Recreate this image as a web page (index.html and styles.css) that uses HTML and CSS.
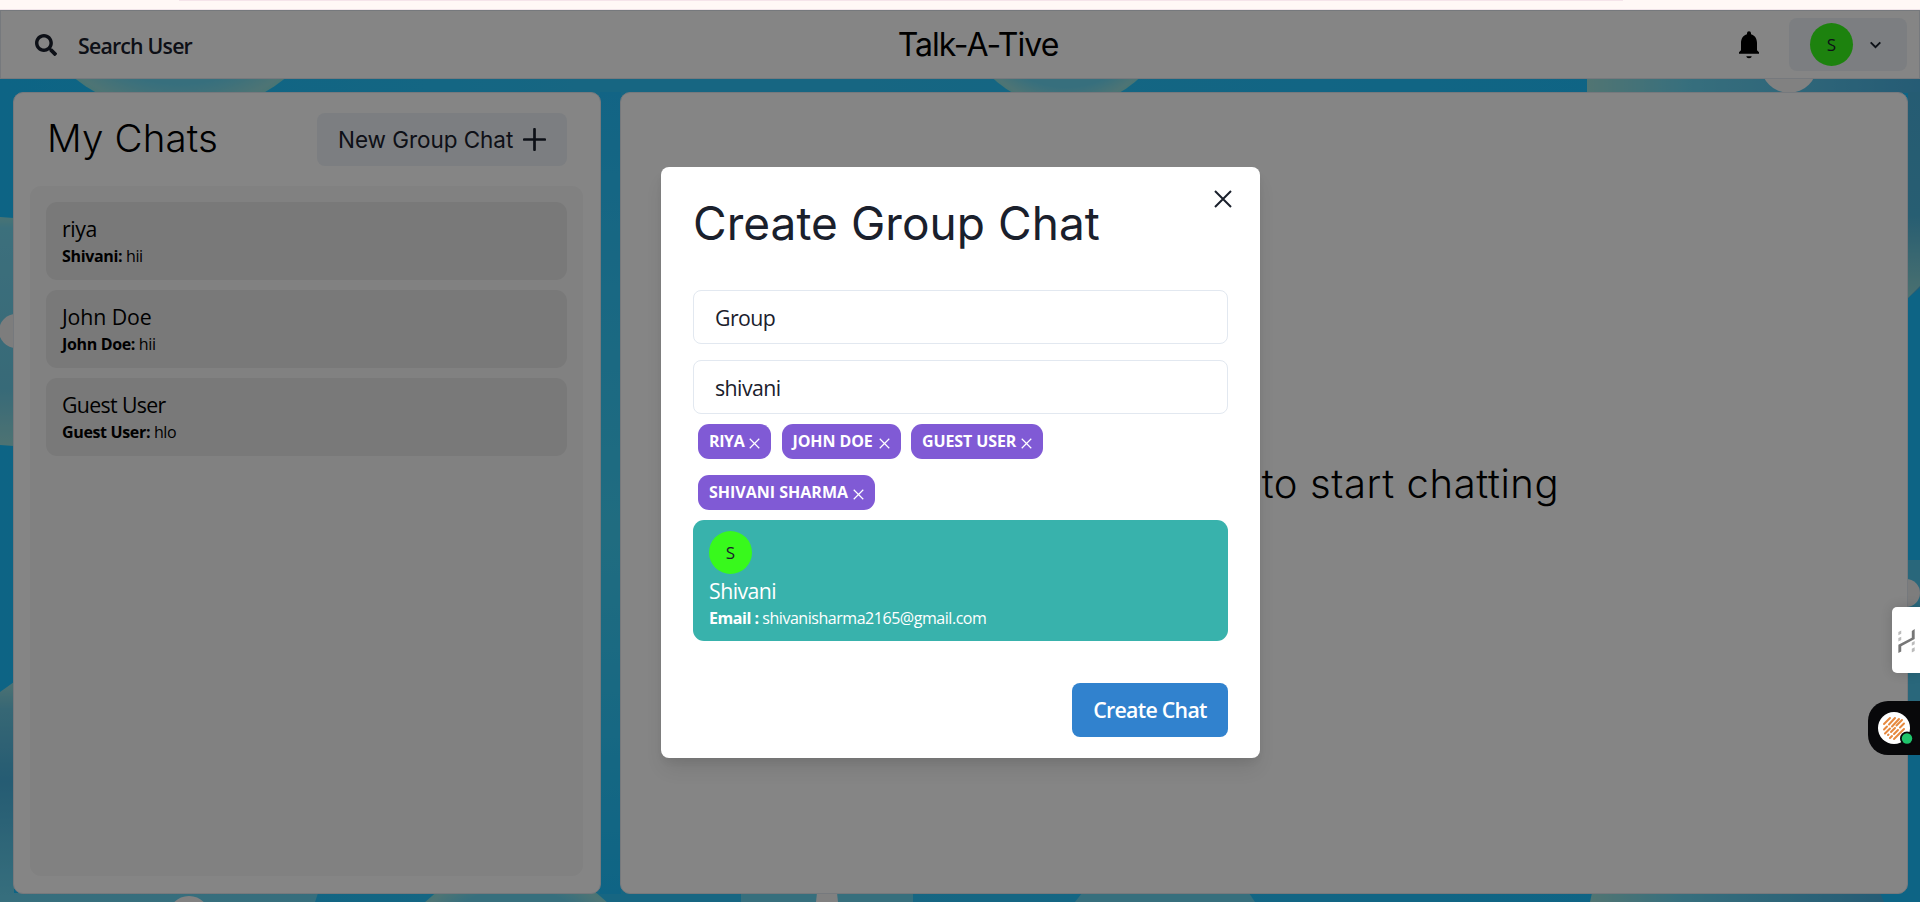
FILE: index.html
```html
<!DOCTYPE html>
<html lang="en">
<head>
<meta charset="utf-8">
<title>Talk-A-Tive</title>
<link rel="stylesheet" href="styles.css">
</head>
<body>
<div class="browser-edge"><div class="edge-line"></div></div>
<div class="app">
  <svg class="backdrop" width="1920" height="892" viewBox="0 10 1920 892" aria-hidden="true">
    <defs>
      <linearGradient id="sky" x1="0" x2="1" y1="0" y2="0"><stop offset="0" stop-color="#19c0ff"/><stop offset=".3" stop-color="#2cc4fa"/><stop offset=".45" stop-color="#2cc4fa"/><stop offset=".85" stop-color="#1dc0ff"/><stop offset="1" stop-color="#19c0ff"/></linearGradient>
      <linearGradient id="mid" x1="0" x2="0" y1="0" y2="1"><stop offset="0" stop-color="#24c0ff"/><stop offset=".55" stop-color="#3fd0f6"/><stop offset="1" stop-color="#1dc0ff"/></linearGradient>
      <radialGradient id="bubble"><stop offset="0" stop-color="#6ad5f0"/><stop offset=".82" stop-color="#6ad5f0"/><stop offset=".97" stop-color="#96dfe0"/><stop offset="1" stop-color="#8be0de"/></radialGradient>
      <linearGradient id="corner" x1="0" x2="1" y1="0" y2="0"><stop offset="0" stop-color="#9ce0dc"/><stop offset=".3" stop-color="#6ad5f0"/><stop offset="1" stop-color="#48b0e0"/></linearGradient>
      <linearGradient id="side" x1="0" x2="0" y1="0" y2="1"><stop offset="0" stop-color="#48b0dc"/><stop offset=".6" stop-color="#4cb4da"/><stop offset="1" stop-color="#8fd8d6"/></linearGradient>
      <linearGradient id="leftmid" x1="0" x2="0" y1="0" y2="1"><stop offset="0" stop-color="#8bdee0"/><stop offset=".05" stop-color="#74d6ee"/><stop offset=".75" stop-color="#6acbe6"/><stop offset="1" stop-color="#96dcdc"/></linearGradient>
      <linearGradient id="leftlow" x1="0" x2="0" y1="0" y2="1"><stop offset="0" stop-color="#96dcdc"/><stop offset=".12" stop-color="#6ac6e0"/><stop offset=".45" stop-color="#48b0dc"/><stop offset="1" stop-color="#6ad5f0"/></linearGradient>
    </defs>
    <rect y="10" width="1920" height="892" fill="url(#sky)"/>
    <rect x="600" y="92" width="21" height="802" fill="url(#mid)"/>
    <circle cx="180" cy="-55" r="170" fill="url(#bubble)"/>
    <circle cx="1066" cy="-1" r="108" fill="url(#bubble)"/>
    <path d="M1587 78H1920V288L1908 298V93H1587Z" fill="url(#corner)"/>
    <path d="M1908 92H1920V286L1908 298Z" fill="url(#side)"/>
    <circle cx="1789" cy="65" r="28" fill="#f8f8f8"/>
    <path d="M0 217L14 218V446L0 445Z" fill="url(#leftmid)"/>
    <circle cx="16" cy="331" r="17" fill="#f0f0f0"/>
    <path d="M0 692L14 682V893H318L315 902H0Z" fill="url(#leftlow)"/>
    <circle cx="189" cy="917" r="21" fill="#f8f8f8"/>
    <circle cx="516" cy="995" r="130" fill="url(#bubble)"/>
    <path d="M741 893H913V902H741Z" fill="#6ad5f0"/>
    <path d="M817 893H837L838 902H816Z" fill="#f8f8f8"/>
    <path d="M1082 893H1249L1255 902H1075Z" fill="#6ad5f0"/>
    <path d="M1592 893H1880L1884 902H1590Z" fill="url(#corner)"/>
    <path d="M1908 560H1920V706L1908 710Z" fill="#4fc6ec"/>
    <circle cx="1906" cy="593" r="14" fill="#f0f0f0"/>
  </svg>
  <header class="topbar">
    <button class="search">
      <svg width="22" height="22" viewBox="0 0 512 512"><path fill="currentColor" d="M505 442.700L405.300 343c-4.500-4.500-10.600-7-17-7H372c27.600-35.300 44-79.700 44-128C416 93.100 322.900 0 208 0S0 93.100 0 208s93.100 208 208 208c48.300 0 92.700-16.400 128-44v16.300c0 6.400 2.500 12.500 7 17l99.700 99.700c9.400 9.400 24.600 9.400 33.900 0l28.300-28.300c9.400-9.400 9.400-24.600.1-34zM208 336c-70.700 0-128-57.200-128-128 0-70.700 57.200-128 128-128 70.700 0 128 57.200 128 128 0 70.700-57.200 128-128 128z"/></svg>
      <span class="search-label">Search User</span>
    </button>
    <h1 class="brand">Talk-A-Tive</h1>
    <div class="tools">
      <svg class="bell" width="32" height="32" viewBox="0 0 24 24"><path d="M12 22c1.100 0 2-.6 2-1.500h-4c0 .9.900 1.500 2 1.500zm7.500-4.500L18 16v-5.500c0-3.300-1.700-5.900-4.500-6.600V3.200a1.500 1.500 0 0 0-3 0v.7C7.700 4.600 6 7.200 6 10.500V16l-1.500 1.500v1.100h15z"/></svg>
      <button class="profile"><span class="avatar">S</span><svg width="21" height="21" viewBox="0 0 24 24"><path fill="none" stroke="currentColor" stroke-width="2.200" d="M6.500 9.500L12 15l5.500-5.500"/></svg></button>
    </div>
  </header>
  <main class="columns">
    <section class="panel chats">
      <div class="chats-head">
        <h2 class="chats-title">My Chats</h2>
        <button class="new-group"><span class="new-label">New Group Chat</span><svg width="23" height="23" viewBox="0 0 23 23"><path stroke="currentColor" stroke-width="2.700" stroke-linecap="round" d="M11.500 1.200V21.800M1.200 11.500H21.800"/></svg></button>
      </div>
      <div class="chat-list">
        <div class="chat"><p class="chat-name">riya</p><p class="chat-last"><b>Shivani:</b> hii</p></div>
        <div class="chat"><p class="chat-name loose">John Doe</p><p class="chat-last"><b>John Doe:</b> hii</p></div>
        <div class="chat"><p class="chat-name tight">Guest User</p><p class="chat-last"><b>Guest User:</b> hlo</p></div>
      </div>
    </section>
    <section class="panel empty"><p class="hint">Click on a user to start chatting</p></section>
  </main>
</div>
<div class="overlay">
  <div class="modal">
    <button class="close"><svg width="18" height="18" viewBox="0 0 18 18"><path stroke="currentColor" stroke-width="2" d="M1 1L17 17M17 1L1 17"/></svg></button>
    <h2 class="modal-title">Create Group Chat</h2>
    <div class="fields">
      <div class="field">Group</div>
      <div class="field">shivani</div>
    </div>
    <div class="tags">
      <span class="tag t1"><span>RIYA</span><svg class="x" viewBox="0 0 12 12"><path d="M.8.800L11.200 11.200M11.200.8L.8 11.200"/></svg></span>
      <span class="tag t2"><span>JOHN DOE</span><svg class="x" viewBox="0 0 12 12"><path d="M.8.800L11.200 11.200M11.200.8L.8 11.200"/></svg></span>
      <span class="tag t3"><span>GUEST USER</span><svg class="x" viewBox="0 0 12 12"><path d="M.8.800L11.200 11.200M11.200.8L.8 11.200"/></svg></span>
      <span class="tag t4"><span>SHIVANI SHARMA</span><svg class="x" viewBox="0 0 12 12"><path d="M.8.800L11.200 11.200M11.200.8L.8 11.200"/></svg></span>
    </div>
    <div class="result">
      <span class="avatar">S</span>
      <p class="result-name">Shivani</p>
      <p class="result-mail"><b>Email :</b> shivanisharma2165@gmail.com</p>
    </div>
    <button class="create">Create Chat</button>
  </div>
</div>
<div class="ext-tab">
  <svg width="18" height="24" viewBox="0 0 18 25"><path fill="#777" d="M0 25V16.500L14 9V2L17 0V10.500L3 18V23.500Z"/><path fill="#bbb" d="M0 3L3 1.500V5L0 6.500ZM0 9.500L3 8V11.500L0 13ZM14 14L17 12.500V16L14 17.500ZM14 20.500L17 19V23L14 24.500Z"/></svg>
</div>
<div class="ext-pill">
  <svg width="42" height="36" viewBox="0 0 42 36"><circle cx="16" cy="16" r="16" fill="#fff"/><g stroke="#e6893f" stroke-width="2" stroke-linecap="round"><path d="M6 12L12 6M6 17.500L9 14.500M11 12.500L17 6M7 21.500L12 16.500M14 14.500L21 7M10 23L10.500 22.500M13 20L17 16M18.500 13.500L24 8M12 26L14 24M16 22L20 18M22 15.500L26 11.500M16 27L26 17"/></g><circle cx="29" cy="26.500" r="7" fill="#08080a"/><circle cx="29" cy="26.500" r="5.200" fill="#1fc46b"/></svg>
</div>
</body>
</html>
```
FILE: styles.css
```css
* { box-sizing: border-box; }
body { margin: 0; width: 1920px; height: 902px; overflow: hidden; font-family: "Open Sans", "Noto Sans", sans-serif; font-size: 16px; line-height: 24px; color: #000; background: #fff8f6; }
h1, h2, p { margin: 0; font-weight: 400; }
button { border: 0; padding: 0; margin: 0; background: none; font: inherit; color: #1a202c; }
svg { display: block; flex: none; }
.browser-edge { height: 10px; border-bottom: 1px solid #f0e4e9; background: #fff8f6; }
.edge-line { height: 1px; margin: 0 297px 0 179px; background: #f5e4ea; }
.app { position: relative; height: 892px; }
.backdrop { position: absolute; top: 0; left: 0; }
.topbar { position: relative; height: 69px; display: flex; align-items: center; justify-content: space-between; padding: 0 12px 0 34px; background: #fff; border: 1px solid #e2e8f0; }
.search { width: 360px; display: flex; align-items: center; gap: 21px; }
.search-label { font-size: 21.300px; font-weight: 600; letter-spacing: -.8px; padding-top: 2px; }
.brand { font-family: Inter, sans-serif; font-size: 32px; letter-spacing: -1px; padding-left: 14px; }
.tools { width: 360px; display: flex; align-items: center; justify-content: flex-end; gap: 24px; }
.profile { width: 118px; height: 53px; display: flex; align-items: center; gap: 12px; padding-left: 21px; border-radius: 8px; background: #edf2f7; }
.avatar { width: 43px; height: 43px; flex: none; display: flex; align-items: center; justify-content: center; border-radius: 50%; background: #38f91c; color: #1a202c; font-size: 17px; }
.columns { position: relative; display: flex; justify-content: space-between; padding: 13px 12px 0 13px; }
.panel { height: 802px; background: #fff; border: 1px solid #e2e8f0; border-radius: 10px; }
.chats { width: 588px; padding: 20px 17px 20px 16px; }
.chats-head { display: flex; justify-content: space-between; height: 53px; padding: 0 16px 0 17px; }
.chats-title { font-family: Inter, sans-serif; font-size: 38.500px; font-weight: 300; line-height: 51px; letter-spacing: .15px; }
.new-group { width: 250px; display: flex; align-items: center; justify-content: space-between; padding: 0 21px; border-radius: 8px; background: #edf2f7; }
.new-label { font-family: Inter, sans-serif; font-size: 22.500px; letter-spacing: -.05px; white-space: nowrap; }
.chat-list { display: flex; flex-direction: column; gap: 10.670px; height: 690px; margin-top: 20px; padding: 16px; border-radius: 11px; background: #f8f8f8; }
.chat { height: 77.500px; padding: 11px 16px; border-radius: 11px; background: #e8e8e8; }
.chat-name { font-size: 21.300px; line-height: 32px; letter-spacing: -.4px; }
.chat-name.loose { letter-spacing: -.1px; }
.chat-name.tight { letter-spacing: -.65px; }
.chat-last { font-size: 16px; line-height: 22px; letter-spacing: -.35px; }
.empty { width: 1288px; display: flex; align-items: center; justify-content: center; padding-bottom: 18px; }
.hint { font-family: Inter, sans-serif; font-size: 40px; font-weight: 300; letter-spacing: .6px; padding-right: 4px; }
.overlay { position: absolute; inset: 10px 0 0; background: rgba(0,0,0,.48); }
.modal { position: absolute; left: 661px; top: 157px; width: 599px; height: 591px; padding: 21px 32px; background: #fff; border-radius: 8px; box-shadow: 0 13px 20px -4px rgba(0,0,0,.1), 0 5px 8px -2px rgba(0,0,0,.06); }
.close { position: absolute; right: 28px; top: 23px; }
.modal-title { font-family: Inter, sans-serif; font-size: 46px; line-height: 70px; color: #1a202c; letter-spacing: .05px; white-space: nowrap; }
.fields { display: flex; flex-direction: column; gap: 16px; margin-top: 32px; }
.field { height: 54px; padding: 2px 21px 0; border: 1px solid #e2e8f0; border-radius: 8px; font-size: 21.300px; line-height: 50px; letter-spacing: -.55px; color: #1a202c; }
.tags { display: flex; flex-wrap: wrap; gap: 16px 10.500px; padding: 10px 5px; }
.tag { height: 35px; display: flex; align-items: center; justify-content: space-between; padding: 0 11px; border-radius: 11px; background: #805ad5; color: #fff; font-size: 16px; font-weight: 700; letter-spacing: -.1px; line-height: 22px; padding-bottom: 1px; white-space: nowrap; }
.t1 { width: 73px; letter-spacing: -.4px; } .t2 { width: 119px; } .t3 { width: 132px; } .t4 { width: 177px; letter-spacing: 0; }
.x { width: 11px; height: 11px; margin-top: 4px; fill: none; stroke: #fff; stroke-width: 1.300; }
.result { height: 121px; padding: 11px 16px; border-radius: 11px; background: #38b2ac; color: #fff; }
.result-name { font-size: 21.300px; line-height: 32px; letter-spacing: -.55px; padding-top: 1px; }
.result-mail { line-height: 22px; letter-spacing: -.46px; white-space: nowrap; }
.create { display: block; width: 156px; height: 54px; margin: 42px 0 0 auto; border-radius: 8px; background: #3182ce; color: #fff; font-size: 21.300px; font-weight: 600; letter-spacing: -.7px; }
.ext-tab { position: absolute; right: 0; top: 607px; width: 28px; height: 66px; padding: 22px 0 0 6px; border-radius: 5px 0 0 5px; background: #fff; overflow: hidden; box-shadow: 0 0 12px rgba(0,0,0,.15); }
.ext-pill { position: absolute; right: 0; top: 701px; width: 52px; height: 54px; padding: 11px 0 0 10px; border-radius: 20px 0 0 20px; background: #08080a; }
```
